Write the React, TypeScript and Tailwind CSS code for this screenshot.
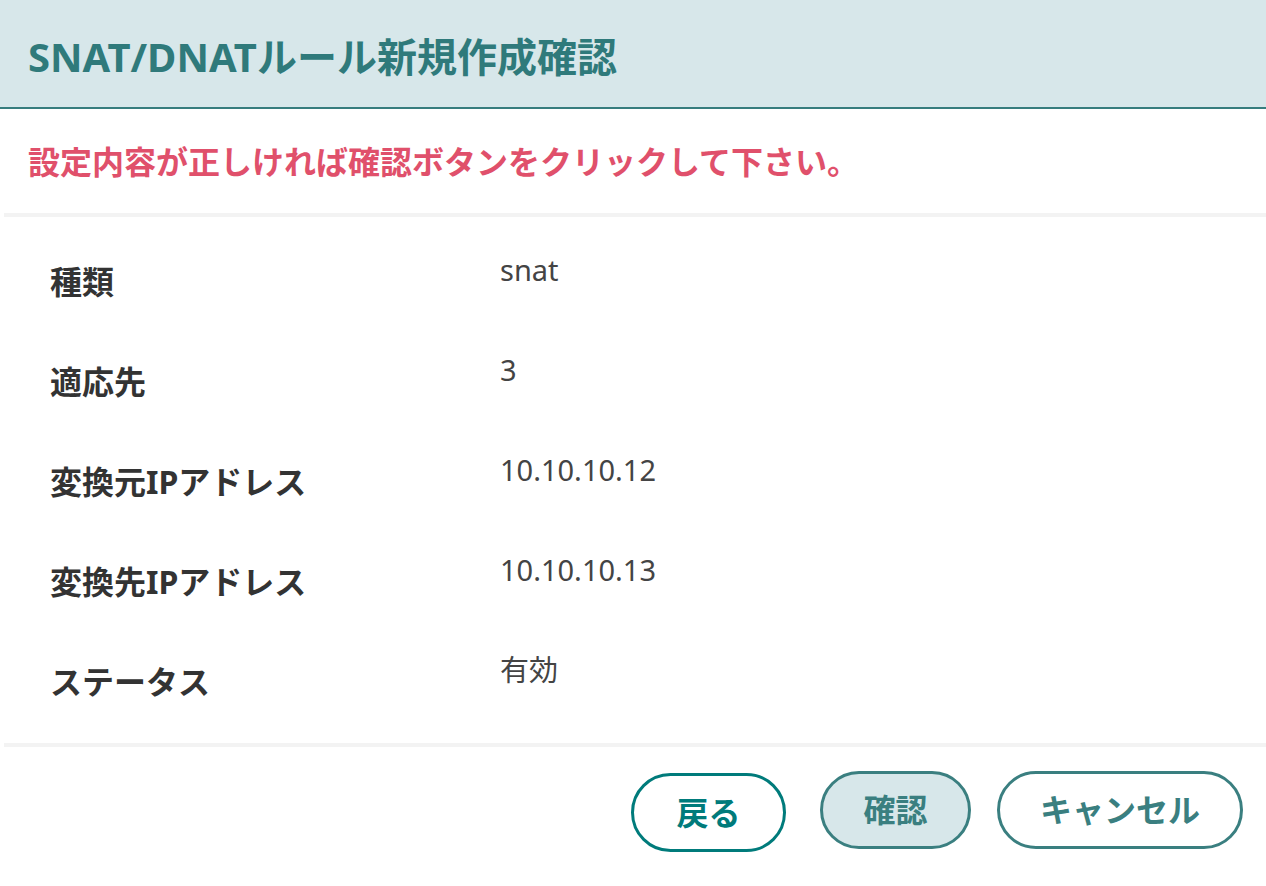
import React from 'react';

const rows = [
  { label: '種類', value: 'snat' },
  { label: '適応先', value: '3' },
  { label: '変換元IPアドレス', value: '10.10.10.12' },
  { label: '変換先IPアドレス', value: '10.10.10.13' },
  { label: 'ステータス', value: '有効' },
];

const font = { fontFamily: '"Noto Sans", "Noto Sans CJK JP", sans-serif' };

export default function App() {
  return (
    <div className="w-[1266px] h-[886px] bg-white flex flex-col overflow-hidden" style={font}>
      {/* header */}
      <div className="h-[109px] shrink-0 bg-[#d7e7ea] border-b-2 border-[#367d7e] flex items-center px-[28px]">
        <h1 className="text-[40px] font-bold text-[#2f7a7b] leading-none pt-[6px]">SNAT/DNATルール新規作成確認</h1>
      </div>

      {/* message */}
      <div className="h-[104px] shrink-0 flex items-center px-[28px]">
        <p className="text-[32px] font-bold text-[#e0506b] leading-none pt-[2px]">設定内容が正しければ確認ボタンをクリックして下さい。</p>
      </div>
      <div className="h-[4px] shrink-0 ml-[4px] bg-[#f3f3f3]" />

      {/* detail rows */}
      <div className="pt-[15px] pb-[11px]">
        {rows.map((r) => (
          <div key={r.label} className="flex h-[100px]">
            <div className="w-[500px] pl-[50px] flex items-center text-[32px] font-bold text-[#333333]">{r.label}</div>
            <div className="pt-[20px] leading-[36px] text-[29px] text-[#444444]">{r.value}</div>
          </div>
        ))}
      </div>
      <div className="h-[4px] shrink-0 ml-[4px] bg-[#f3f3f3]" />

      {/* buttons */}
      <div className="flex justify-end items-start pt-[24px] pr-[23px]">
        <button className="mt-[2px] w-[155px] h-[79px] rounded-full border-[3px] border-[#007b7b] bg-white text-[#007b7b] text-[32px] font-bold">戻る</button>
        <button className="ml-[34px] w-[151px] h-[78px] rounded-full border-[3px] border-[#3a7f80] bg-[#d7e7ea] text-[#3a7f80] text-[32px] font-bold">確認</button>
        <button className="ml-[26px] w-[246px] h-[78px] rounded-full border-[3px] border-[#3a7f80] bg-white text-[#3a7f80] text-[32px] font-bold">キャンセル</button>
      </div>
    </div>
  );
}
